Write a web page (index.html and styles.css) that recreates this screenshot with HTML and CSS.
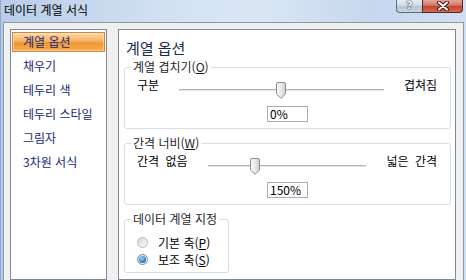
FILE: index.html
```html
<!DOCTYPE html>
<html lang="ko">
<head>
  <meta charset="UTF-8">
  <meta name="viewport" content="width=device-width, initial-scale=1.0">
  <title>데이터 계열 서식</title>
  <link rel="stylesheet" href="styles.css">
</head>
<body>
  <div class="window">
    <div class="titlebar">
      <span class="title">데이터 계열 서식</span>
      <div class="caption-buttons">
        <button class="cap-btn help">?</button>
        <button class="cap-btn close">
          <svg width="14" height="10" viewBox="0 0 14 10">
            <path d="M3 1.5L11 8.5M11 1.5L3 8.5" stroke="#3a1712" stroke-width="4" stroke-linecap="round"/>
            <path d="M3 1.5L11 8.5M11 1.5L3 8.5" stroke="#fff" stroke-width="2" stroke-linecap="round"/>
          </svg>
        </button>
      </div>
    </div>

    <div class="client">
      <ul class="nav">
        <li class="nav-item active">계열 옵션</li>
        <li class="nav-item">채우기</li>
        <li class="nav-item">테두리 색</li>
        <li class="nav-item">테두리 스타일</li>
        <li class="nav-item">그림자</li>
        <li class="nav-item">3차원 서식</li>
      </ul>

      <section class="pane">
        <h2 class="pane-title">계열 옵션</h2>

        <fieldset class="group">
          <legend>계열 겹치기(<u>O</u>)</legend>
          <div class="slider-row">
            <span>구분</span>
            <div class="slider">
              <span class="thumb" style="left: 50%">
                <svg width="10" height="17" viewBox="0 0 10 17">
                  <defs>
                    <linearGradient id="thumbFill" x1="0" y1="0" x2="1" y2="0">
                      <stop offset="0" stop-color="#fbfbfb"/>
                      <stop offset="0.5" stop-color="#e9e9e9"/>
                      <stop offset="1" stop-color="#cfcfcf"/>
                    </linearGradient>
                  </defs>
                  <path d="M2 0.5H8Q9.5 0.5 9.5 2V12L5 16.3L0.5 12V2Q0.5 0.5 2 0.5Z" fill="url(#thumbFill)" stroke="#8c8c8c"/>
                </svg>
              </span>
            </div>
            <span>겹쳐짐</span>
          </div>
          <div class="value-box">0%</div>
        </fieldset>

        <fieldset class="group">
          <legend>간격 너비(<u>W</u>)</legend>
          <div class="slider-row">
            <span>간격 없음</span>
            <div class="slider">
              <span class="thumb" style="left: 30%">
                <svg width="10" height="17" viewBox="0 0 10 17">
                  <path d="M2 0.5H8Q9.5 0.5 9.5 2V12L5 16.3L0.5 12V2Q0.5 0.5 2 0.5Z" fill="url(#thumbFill)" stroke="#8c8c8c"/>
                </svg>
              </span>
            </div>
            <span>넓은 간격</span>
          </div>
          <div class="value-box">150%</div>
        </fieldset>

        <fieldset class="group group-axis">
          <legend>데이터 계열 지정</legend>
          <label class="radio-row"><span class="radio"></span>기본 축(<u>P</u>)</label>
          <label class="radio-row"><span class="radio checked"></span>보조 축(<u>S</u>)</label>
        </fieldset>
      </section>
    </div>
  </div>
</body>
</html>
```

FILE: styles.css
```css
* {
  box-sizing: border-box;
}

html, body {
  height: 100%;
  margin: 0;
  padding: 0;
  overflow: hidden;
  font-family: "Noto Sans CJK KR", "Noto Sans", sans-serif;
  font-size: 12px;
}

body {
  background: #c3d5ec;
}

.window {
  height: 280px;
  display: flex;
  flex-direction: column;
  border-left: 1px solid #8ea9cf;
  background: linear-gradient(to right, #b8cde8, #d2e1f2 35%, #dae6f4 55%, #c6d8ee 80%, #d0dff2);
}

/* title bar */
.titlebar {
  height: 22px;
  flex: none;
  display: flex;
  align-items: flex-start;
  padding-left: 3px;
}

.title {
  line-height: 20px;
  color: #000;
}

.caption-buttons {
  margin-left: auto;
  margin-right: 3px;
  display: flex;
}

.cap-btn {
  height: 13px;
  padding: 0;
  border: 1px solid #5b6b82;
  border-top: 0;
  display: flex;
  align-items: center;
  justify-content: center;
}

.help {
  width: 26px;
  border-right: 0;
  border-radius: 0 0 0 4px;
  background: linear-gradient(#e8eef5, #ccd7e5 50%, #b5c4d8 51%, #c9d4e3);
  color: #fff;
  font: bold 11px/12px "DejaVu Sans", sans-serif;
  text-shadow: 0 0 1px #26364d, 0 0 1px #26364d, 0 0 1px #26364d;
}

.close {
  width: 41px;
  border-color: #5a2620;
  border-radius: 0 0 4px 0;
  background: linear-gradient(#e6a799, #d27764 45%, #c0432f 50%, #d66b53);
}

/* dialog body */
.client {
  flex: 1;
  min-height: 0;
  margin: 0 2px;
  border: 1px solid #8b98a8;
  border-bottom: 0;
  background: #f0f0f0;
  display: flex;
  gap: 11px;
  padding: 6px 7px 0 6px;
}

.nav {
  width: 97px;
  flex: none;
  margin: 0;
  padding: 2px 1px;
  list-style: none;
  border: 1px solid #828790;
  background: #fff;
  display: flex;
  flex-direction: column;
  gap: 4px;
}

.nav-item {
  height: 20px;
  line-height: 18px;
  padding-left: 10px;
  border: 1px solid transparent;
  color: #16287a;
}

.nav-item.active {
  border-color: #c28a4a;
  background: linear-gradient(#fbd9a8, #f7b264 45%, #f1952f 55%, #f6ae56);
  box-shadow: inset 0 0 0 1px rgba(255, 236, 200, 0.5);
}

.pane {
  flex: 1;
  border: 1px solid #828790;
  background: #fff;
  padding: 8px 4px 0 5px;
}

.pane-title {
  margin: 0 0 2px 2px;
  font-size: 15px;
  line-height: 20px;
  font-weight: normal;
  color: #1b2a4f;
}

.group {
  margin: 0;
  padding: 0 0 6px;
  min-width: 0;
  border: 1px solid #d5dfe5;
  border-radius: 3px;
}

.group + .group {
  margin-top: 7px;
}

.group legend {
  margin-left: 6px;
  padding: 0 2px;
  line-height: 14px;
  color: #1e1e1e;
}

.slider-row {
  height: 24px;
  display: flex;
  align-items: flex-start;
  padding: 4px 13px 0 12px;
  line-height: 14px;
  word-spacing: 3px;
  color: #000;
}

.slider {
  flex: 1;
  position: relative;
  height: 2px;
  margin: 11px 20px 0;
  border-top: 1px solid #b3b3b3;
  border-bottom: 1px solid #e6e6e6;
}

.thumb {
  position: absolute;
  top: -8px;
  width: 10px;
  height: 17px;
  transform: translateX(-50%);
  display: block;
}

.thumb svg {
  display: block;
}

.value-box {
  width: 41px;
  height: 16px;
  margin: 8px auto 0;
  padding-left: 2px;
  border: 1px solid #abadb3;
  background: #fff;
  line-height: 14px;
  color: #000;
}

.group-axis {
  width: 105px;
  padding: 8px 0 4px;
}

.radio-row {
  height: 17px;
  display: flex;
  align-items: center;
  padding-left: 12px;
  color: #000;
}

.radio {
  position: relative;
  width: 11px;
  height: 11px;
  margin-right: 10px;
  border-radius: 50%;
  border: 1px solid #b9b9b9;
  background: linear-gradient(135deg, #d9d9d9, #f8f8f8);
}

.radio.checked {
  border-color: #7e8893;
}

.radio.checked::after {
  content: "";
  position: absolute;
  inset: 1px;
  border-radius: 50%;
  background: radial-gradient(circle at 40% 35%, #9bd6ff, #2b7cc8 60%, #164a86);
}
```
